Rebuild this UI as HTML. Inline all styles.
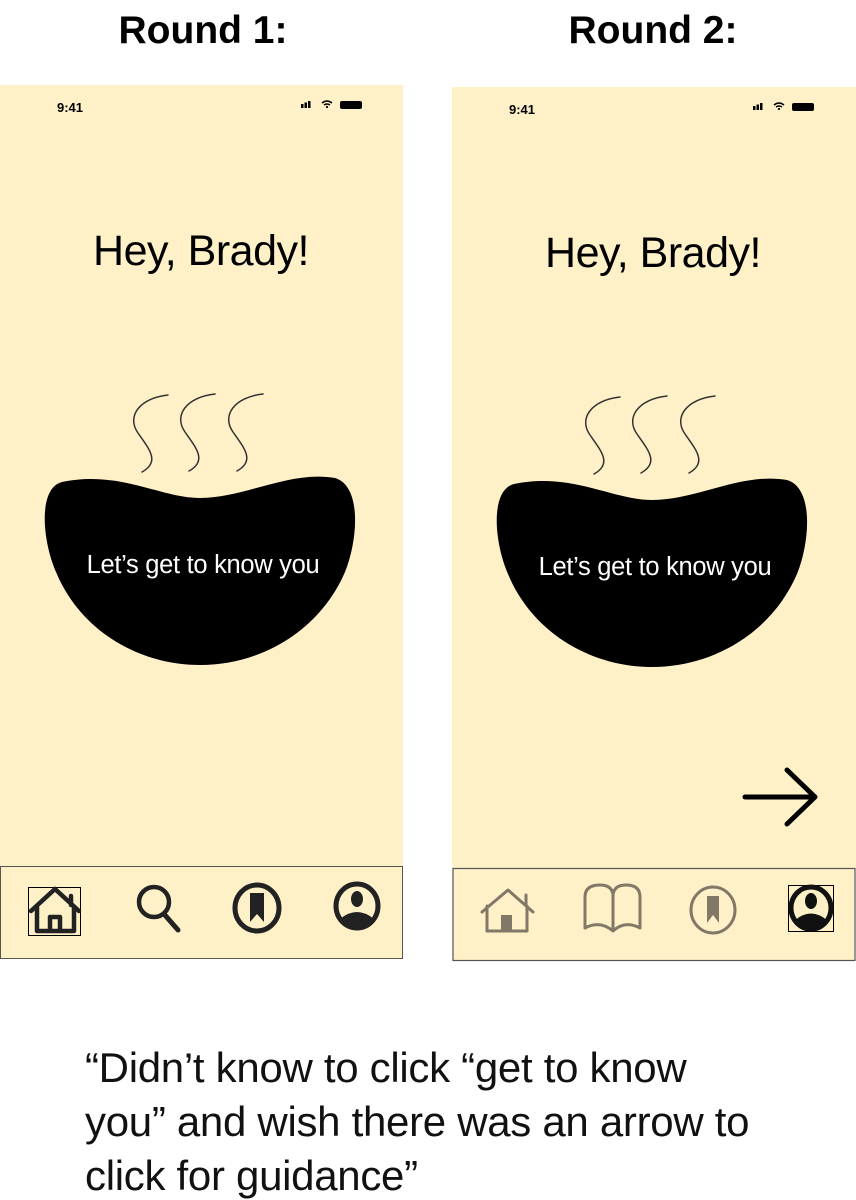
<!DOCTYPE html>
<html><head><meta charset="utf-8"><style>
html,body{margin:0;padding:0;background:#fff;}
svg{display:block}
text{font-family:"Liberation Sans",sans-serif}
</style></head><body>
<svg width="856" height="1200" viewBox="0 0 856 1200" xmlns="http://www.w3.org/2000/svg">
<defs>
<g id="bowl">
<path d="M62 482 C120 470 160 498 200 498 C245 498 290 470 335 478 C362 486 358 540 345 572 C320 630 262 665 200 665 C138 665 80 630 56 572 C42 540 38 488 62 482 Z" fill="#000"/>
<g fill="none" stroke="#333" stroke-width="1.5" stroke-linecap="round">
<path d="M168 395 C140 398 126 416 138 433 C150 450 160 462 142 472"/>
<path d="M215 394 C187 397 173 415 185 432 C197 449 207 461 189 471"/>
<path d="M263 394 C235 397 221 415 233 432 C245 449 255 461 237 471"/>
</g>
<text x="203" y="573" font-size="25.5" fill="#fff" text-anchor="middle" letter-spacing="-0.3">Let’s get to know you</text>
<text x="201" y="265" font-size="43" fill="#000" text-anchor="middle" letter-spacing="-0.5">Hey, Brady!</text>
<text x="57" y="112" font-size="13" font-weight="bold" fill="#000">9:41</text>
<rect x="301" y="104" width="2.5" height="4" fill="#000"/><rect x="304.5" y="102.5" width="2.5" height="5.5" fill="#000"/><rect x="308" y="101" width="2.5" height="7" fill="#000"/>
<path d="M322 103 Q327 99 332 103 M324 105 Q327 103 330 105" stroke="#000" stroke-width="1.5" fill="none"/><circle cx="327" cy="107" r="1.1"/>
<rect x="340" y="101" width="22" height="8" rx="2" fill="#000"/>
</g>
</defs>

<text x="203" y="43" font-size="39" font-weight="bold" text-anchor="middle">Round 1:</text>
<text x="653" y="43" font-size="39" font-weight="bold" text-anchor="middle">Round 2:</text>

<rect x="0" y="85" width="403" height="781" fill="#FEF0C7"/>
<rect x="0.5" y="866.5" width="402" height="92" fill="#FEF0C7" stroke="#555" stroke-width="1"/>
<use href="#bowl"/>
<rect x="28.5" y="887.5" width="52" height="48" fill="none" stroke="#000" stroke-width="1"/>
<path d="M31 911 L55 889 L79 911 M71 896 V905 M37 907 V931 H74 V907 M50 931 V917 H60 V931" fill="none" stroke="#222" stroke-width="4.5" stroke-linejoin="round" stroke-linecap="round"/>
<circle cx="154" cy="902" r="15" fill="none" stroke="#222" stroke-width="4.5"/>
<path d="M164 914 L178 930" stroke="#222" stroke-width="5" stroke-linecap="round"/>
<ellipse cx="257" cy="908" rx="22" ry="23" fill="none" stroke="#222" stroke-width="5"/>
<path d="M250 893 H264 V922 L257 914 L250 922 Z" fill="#222"/>
<ellipse cx="357" cy="906" rx="21" ry="22" fill="none" stroke="#222" stroke-width="5"/>
<ellipse cx="357" cy="899" rx="6" ry="8" fill="#222"/>
<path d="M340 919 Q357 905 374 919 Q368 928 357 928 Q346 928 340 919 Z" fill="#222"/>

<rect x="452" y="87" width="404" height="781" fill="#FEF0C7"/>
<rect x="453" y="868.5" width="402" height="92" fill="#FEF0C7" stroke="#555" stroke-width="1.2"/>
<use href="#bowl" transform="translate(452,2)"/>
<path d="M745 797 H813 M787 770 L815 797 L787 824" fill="none" stroke="#000" stroke-width="5" stroke-linecap="round" stroke-linejoin="round"/>
<g stroke="#827867" fill="none" stroke-width="3" stroke-linecap="round" stroke-linejoin="round">
<path d="M482 912 L508 890 L533 912 M526 895 V904 M487 906 V931 H527 V906"/>
<path d="M585 897 Q585 885 600 885 Q612 885 613 895 Q614 885 626 885 Q640 885 640 897 V928 Q625 920 613 931 Q600 920 585 928 Z M613 895 V931"/>
<ellipse cx="713" cy="910" rx="22" ry="23"/>
</g>
<rect x="501" y="915" width="11" height="17" fill="#827867"/>
<path d="M707 896 H719 V923 L713 915 L707 923 Z" fill="#827867"/>
<rect x="788.5" y="885.5" width="45" height="46" fill="none" stroke="#000" stroke-width="1"/>
<ellipse cx="811" cy="908" rx="20" ry="21" fill="none" stroke="#111" stroke-width="5"/>
<ellipse cx="811" cy="901" rx="6" ry="8" fill="#111"/>
<path d="M794 921 Q811 906 828 921 Q822 930 811 930 Q800 930 794 921 Z" fill="#111"/>

<text font-size="42" fill="#111" letter-spacing="-0.3">
<tspan x="85" y="1082">“Didn’t know to click “get to know</tspan>
<tspan x="85" y="1136">you” and wish there was an arrow to</tspan>
<tspan x="85" y="1190">click for guidance”</tspan>
</text>
</svg>
</body></html>
